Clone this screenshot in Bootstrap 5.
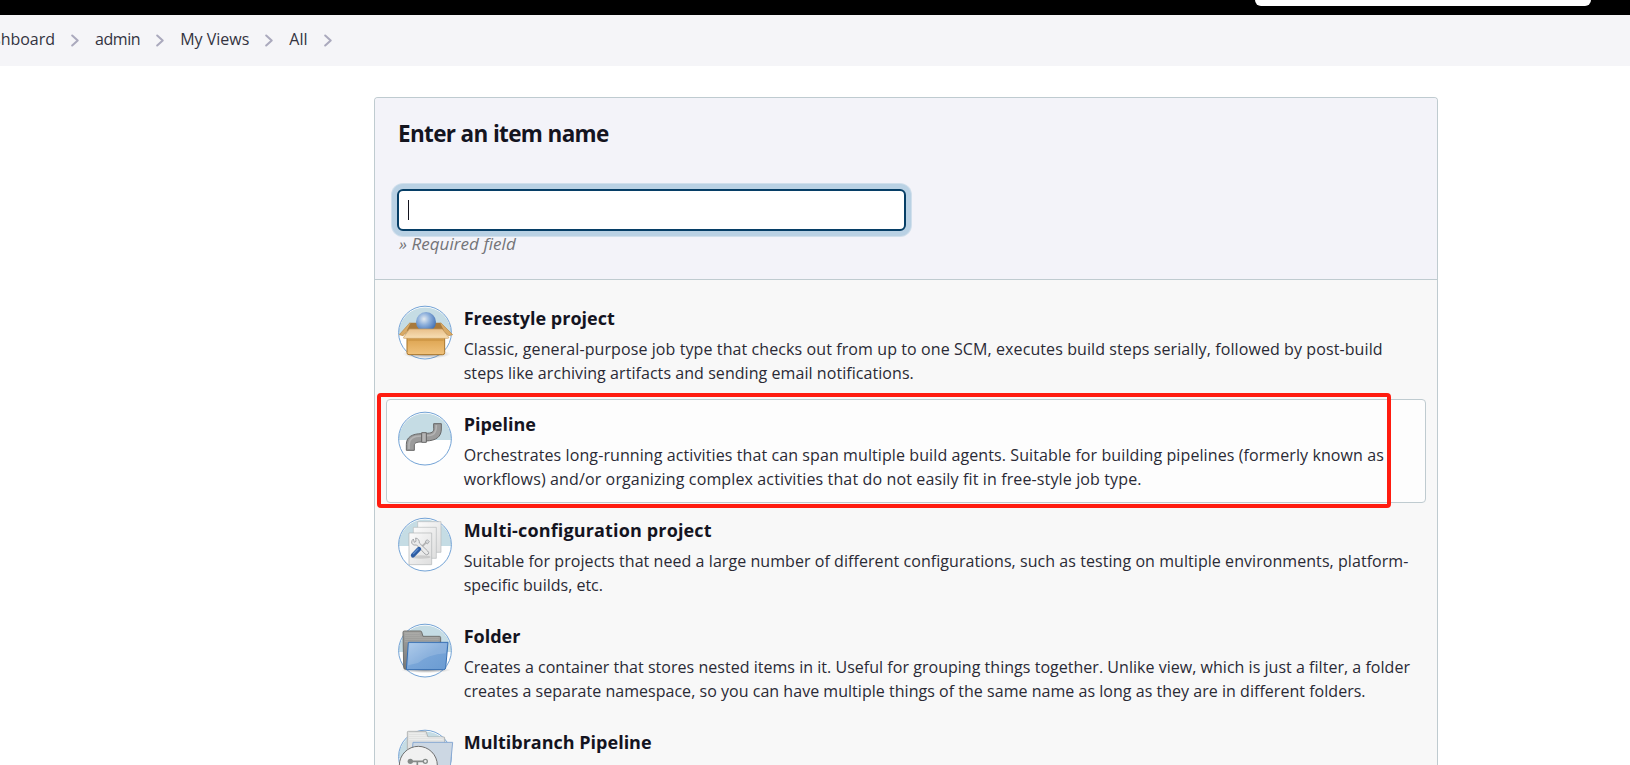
<!DOCTYPE html>
<html lang="en">
<head>
<meta charset="utf-8">
<title>New Item</title>
<link rel="stylesheet" href="https://cdn.jsdelivr.net/npm/bootstrap@5.3.0/dist/css/bootstrap.min.css">
<style>
body{font-family:"Open Sans","Noto Sans",sans-serif;font-size:16px;line-height:24px;color:#14141f;height:765px;overflow:hidden;background:#fff}
.topbar{height:15px;background:#000;padding-right:39px}
.searchbox{width:336px;height:6px;background:#fff;border-radius:0 0 6px 6px}
.crumbs{height:51px;background:#f5f5f8;padding-top:12px;overflow:hidden;color:#33333f}
.crumbs span{white-space:nowrap;flex:none}
.crumbs svg{flex:none;width:8px;height:13px;margin:7px 16px 0;fill:none;stroke:#aaa9bd;stroke-width:2;stroke-linecap:round;stroke-linejoin:round}
.crumb-home{margin-left:-27.5px}
.crumb-user{letter-spacing:-.45px}
.panelbox{width:1064px;height:668px;margin:31px 0 0 374px;border:1px solid #bfcbd0;border-bottom:0;border-radius:4px 4px 0 0;background:#f8f8f8;overflow:hidden}
.panelhead{height:182px;background:#f3f3f9;border-bottom:1px solid #bfcbd0;padding:20px 22px 0}
.panelhead h1{font-size:22.5px;line-height:32px;font-weight:700;letter-spacing:-.65px;margin:0 0 39px 1px;white-space:nowrap}
.namefield{width:509px;height:42px;border:2px solid #063e66;border-radius:6px;background:#fff;box-shadow:0 0 0 5px #b9d1e4,0 0 0 6px #d0dfec;padding:9px}
.caret{width:1px;height:20px;background:#14141f}
.req{font-style:italic;font-size:17px;letter-spacing:.05px;color:#747478;margin:1px 0 0 2px;white-space:nowrap}
.items{padding:13px 11px 0}
.item{height:104px;margin-bottom:2px;border:1px solid transparent;border-radius:4px;padding:11px 11px 0;gap:11.7px}
.item.active-item{background:#fdfdfd;border-color:#bfcbd0}
.item svg{width:54px;height:54px;flex:none;margin-top:1px;overflow:visible}
.item h2{font-size:18px;line-height:26px;font-weight:700;letter-spacing:0;margin:0 0 6px;white-space:nowrap}
.item h2.wide-title{letter-spacing:.15px}
.item p{margin:0;white-space:nowrap;color:#2a2a35}
.ls0{letter-spacing:.03px}.ls1{letter-spacing:.06px}.ls2{letter-spacing:.095px}.ls3{letter-spacing:.13px}
.markframe{position:absolute;left:377px;top:393px;width:1014px;height:115px;border:4px solid #ff1c10;border-radius:4px}
</style>
</head>
<body>
<svg width="0" height="0" class="position-absolute">
<defs>
<linearGradient id="gBox" x1="0" y1="0" x2="0" y2="1"><stop offset="0" stop-color="#d99e48"/><stop offset="1" stop-color="#f0c27c"/></linearGradient>
<linearGradient id="gFlap" x1="0" y1="0" x2="0" y2="1"><stop offset="0" stop-color="#e9c08a"/><stop offset="1" stop-color="#f8dfb5"/></linearGradient>
<radialGradient id="gBall" cx=".4" cy=".35" r=".65"><stop offset="0" stop-color="#e4ebf0"/><stop offset=".45" stop-color="#8fb1dc"/><stop offset="1" stop-color="#4473b5"/></radialGradient>
<radialGradient id="gShade"><stop offset="0" stop-color="#555" stop-opacity=".6"/><stop offset="1" stop-color="#555" stop-opacity="0"/></radialGradient>
<linearGradient id="gBlue" x1="0" y1="0" x2="1" y2="1"><stop offset="0" stop-color="#a3c4e8"/><stop offset=".5" stop-color="#78a5d8"/><stop offset="1" stop-color="#6a9bd2"/></linearGradient>
<linearGradient id="gGrey" x1="0" y1="0" x2="0" y2="1"><stop offset="0" stop-color="#a5a5a2"/><stop offset="1" stop-color="#777775"/></linearGradient>
<linearGradient id="gPaper" x1="0" y1="0" x2="1" y2="1"><stop offset="0" stop-color="#fbfbfb"/><stop offset="1" stop-color="#dedede"/></linearGradient>
<g id="disc"><circle cx="27" cy="26.6" r="26.4" fill="#fff"/><path d="M.6 28A26.4 26.4 0 1 1 53.4 28Z" fill="#c5dce4"/><circle cx="27" cy="26.6" r="26.4" fill="none" stroke="#73a3d6"/></g>
<path id="chev" d="M1.2 1.5 6.7 6.5 1.2 11.5"/>
</defs>
</svg>
<div class="topbar d-flex justify-content-end"><div class="searchbox"></div></div>
<nav class="crumbs d-flex">
<span class="crumb-home">Dashboard</span><svg viewBox="0 0 8 13"><use href="#chev"/></svg>
<span class="crumb-user">admin</span><svg viewBox="0 0 8 13"><use href="#chev"/></svg>
<span>My Views</span><svg viewBox="0 0 8 13"><use href="#chev"/></svg>
<span>All</span><svg viewBox="0 0 8 13"><use href="#chev"/></svg>
</nav>
<main class="panelbox">
<div class="panelhead">
<h1>Enter an item name</h1>
<div class="namefield"><div class="caret"></div></div>
<div class="req">» Required field</div>
</div>
<div class="items">
<div class="item d-flex">
<svg viewBox="0 0 54 54"><use href="#disc"/>
<g transform="scale(.33333) translate(-84 -48)">
<ellipse cx="170" cy="192" rx="72" ry="14" fill="url(#gShade)"/>
<path d="M120 98 88 134 99 137 124 112ZM212 98 248 134 236 137 208 112Z" fill="#d9aa66" stroke="#b9853c" stroke-width="2"/>
<path d="M122 98H210L222 122H110Z" fill="#a87a3c"/>
<circle cx="168" cy="96" r="30" fill="url(#gBall)"/>
<path d="M111 136H224V188Q224 194 218 194H117Q111 194 111 188Z" fill="url(#gBox)" stroke="#a8752b" stroke-width="3"/>
<path d="M118 117H217L236 142Q237 145 233 145H103Q99 145 101 142Z" fill="url(#gFlap)" stroke="#c4985c" stroke-width="2"/>
<path d="M115 150H221" stroke="#bd8534" stroke-width="5" opacity=".5"/>
</g></svg>
<div><h2>Freestyle project</h2>
<p class="ls2">Classic, general-purpose job type that checks out from up to one SCM, executes build steps serially, followed by post-build</p>
<p class="ls1">steps like archiving artifacts and sending email notifications.</p></div>
</div>
<div class="item active-item d-flex">
<svg viewBox="0 0 54 54"><use href="#disc"/>
<g transform="scale(.33333) translate(-84 -66)" stroke="#666" stroke-width="3" stroke-linejoin="round" fill="#9b9b9b">
<path d="M109 181V163C109 142 126 131 155 131V156C139 156 134 159 133 165V181Z"/>
<path d="M167 130C185 130 192 126 191 116V101H214V117C214 140 199 152 168 153Z"/>
<path d="M155 128H169V157H155Z" fill="#b5b5b5"/>
<path d="M117 177V164C117 147 129 138 153 138M171 137C191 137 199 130 199 105" fill="none" stroke="#b4b4b4" stroke-width="5"/>
</g></svg>
<div><h2>Pipeline</h2>
<p class="ls2">Orchestrates long-running activities that can span multiple build agents. Suitable for building pipelines (formerly known as</p>
<p class="ls3">workflows) and/or organizing complex activities that do not easily fit in free-style job type.</p></div>
</div>
<div class="item d-flex">
<svg viewBox="0 0 54 54"><use href="#disc"/>
<g transform="scale(.33333) translate(-84 -54)">
<path d="M143 65H213V157H143Z" fill="url(#gPaper)" stroke="#b8bbbd" stroke-width="2"/>
<path d="M130 82H199V175H130Z" fill="url(#gPaper)" stroke="#b8bbbd" stroke-width="2"/>
<path d="M117 99H185V194H117Z" fill="url(#gPaper)" stroke="#b0b3b5" stroke-width="2"/>
<ellipse cx="152" cy="171" rx="30" ry="5" fill="#999" opacity=".35"/>
<path d="M170 126 150 145" stroke="#888" stroke-width="5"/><path d="M170 126 150 145" stroke="#e8e8e8" stroke-width="2.5"/>
<path d="M130 117Q124 121 125 130Q131 138 140 135L165 162Q170 167 175 162Q178 158 173 153L148 129Q149 117 137 114L138 124 133 127Z" fill="#eaeaea" stroke="#979a9d" stroke-width="2.5" stroke-linejoin="round"/>
<path d="M129 166 147 147" stroke="#2c5ca3" stroke-width="13" stroke-linecap="round"/><path d="M130 161 144 147" stroke="#5d8bcc" stroke-width="4" stroke-linecap="round"/>
<path d="M165 125 172 119 178 125 172 132Z" fill="#d5d7d9" stroke="#8f9295" stroke-width="2"/>
</g></svg>
<div><h2 class="wide-title">Multi-configuration project</h2>
<p class="ls1">Suitable for projects that need a large number of different configurations, such as testing on multiple environments, platform-</p>
<p>specific builds, etc.</p></div>
</div>
<div class="item d-flex">
<svg viewBox="0 0 54 54"><use href="#disc"/>
<g transform="scale(.33333) translate(-84 -42)">
<ellipse cx="168" cy="180" rx="75" ry="9" fill="url(#gShade)"/>
<path d="M99 67Q99 63 103 63H151Q154 63 155 66L159 79H208Q212 79 212 83V178H106Q101 178 101 172Z" fill="url(#gGrey)" stroke="#60605e" stroke-width="2.5"/>
<path d="M105 70H149M105 76H151M105 82H206M105 88H206M105 94H206" stroke="#b5b5b2" stroke-width="1.5"/>
<path d="M115 97H234L227 174Q226 179 221 179H109Z" fill="url(#gBlue)" stroke="#376fb3" stroke-width="3" stroke-linejoin="round"/>
<path d="M118 100H231L228 130Q172 134 144 159L114 166Z" fill="#fff" opacity=".15"/>
</g></svg>
<div><h2>Folder</h2>
<p class="ls0">Creates a container that stores nested items in it. Useful for grouping things together. Unlike view, which is just a filter, a folder</p>
<p class="ls0">creates a separate namespace, so you can have multiple things of the same name as long as they are in different folders.</p></div>
</div>
<div class="item d-flex">
<svg viewBox="0 0 54 54"><use href="#disc"/>
<g transform="scale(.33333) translate(-84 -90)">
<path d="M112 96Q112 94 115 94H168L174 111H222Q224 111 224 114V210H112Z" fill="#e0e1e0" stroke="#aaadad" stroke-width="2.5"/>
<path d="M117 101H164M117 107H167M117 113H218M117 119H218" stroke="#f5f5f5" stroke-width="2"/>
<path d="M129 127H248L240 210H122Z" fill="#ccd7e3" stroke="#88a9d3" stroke-width="3"/>
<circle cx="145" cy="196" r="57" fill="#f1f1f1" stroke="#6e6e6e" stroke-width="3"/>
<path d="M121 184H165M142 184V210" stroke="#858a88" stroke-width="5" fill="none"/>
<circle cx="121" cy="184" r="8" fill="#858a88"/><circle cx="166" cy="184" r="6" fill="#f1f1f1" stroke="#858a88" stroke-width="4"/>
</g></svg>
<div><h2>Multibranch Pipeline</h2></div>
</div>
</div>
</main>
<div class="markframe"></div>
<script src="https://cdn.jsdelivr.net/npm/bootstrap@5.3.0/dist/js/bootstrap.bundle.min.js"></script>
</body>
</html>
